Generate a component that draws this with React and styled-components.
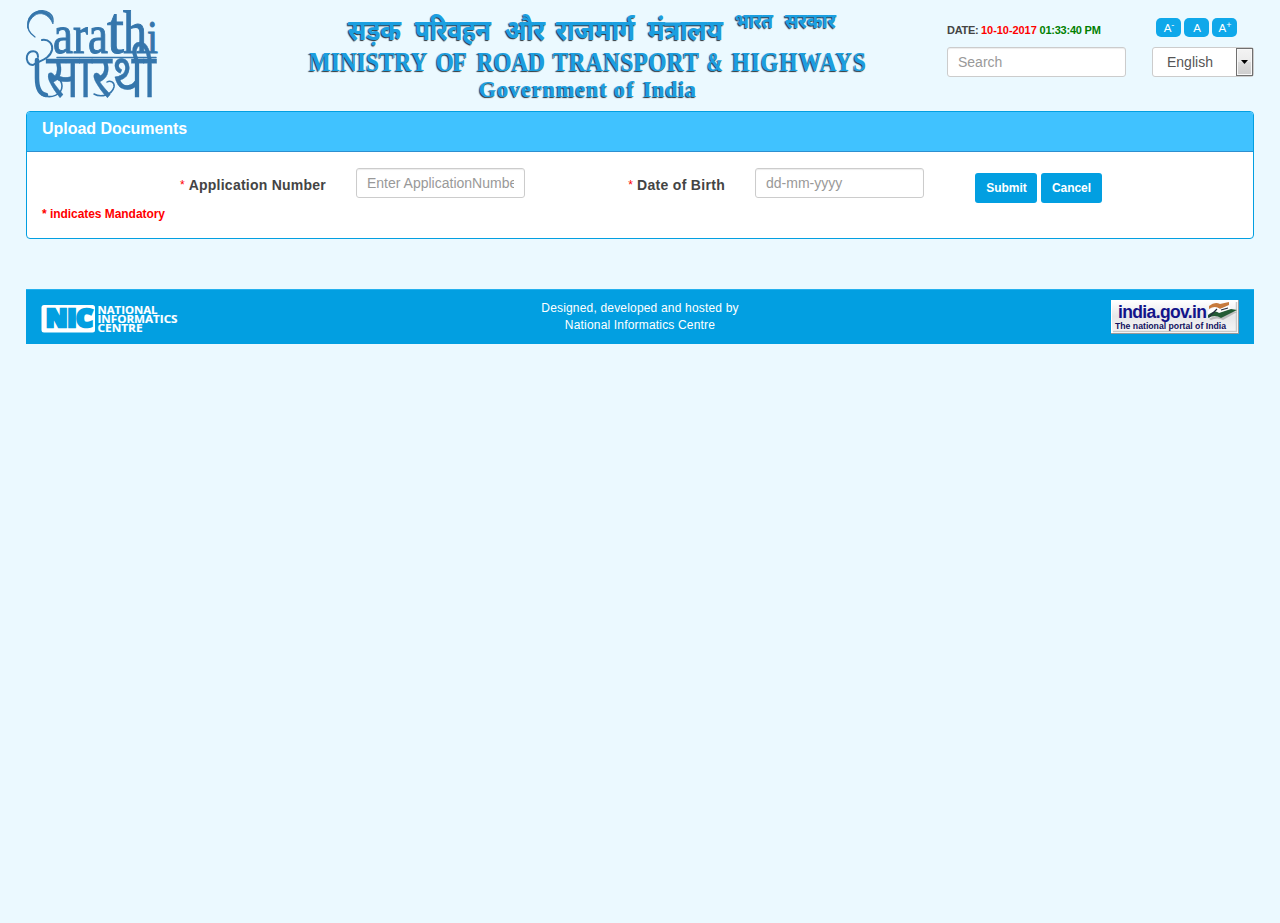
import React from "react";
import styled, { createGlobalStyle } from "styled-components";

const GlobalStyle = createGlobalStyle`
  * { box-sizing: border-box; }
  body {
    margin: 0;
    background: #ebf9ff;
    font-family: "Liberation Sans", Arial, sans-serif;
    font-size: 14px;
    color: #444;
  }
`;

const Page = styled.div`
  width: 1228px;
  margin: 0 auto;
`;

const Header = styled.header`
  display: flex;
  height: 111px;
`;

const LogoCell = styled.div`
  width: 280px;
  padding-top: 4px;
`;

const BannerCell = styled.div`
  width: 641px;
`;

const Drawing = styled.svg`
  display: block;
  overflow: visible;
`;

const BannerText = styled.text`
  fill: #1b9fe0;
  font-family: ${(p) => (p.$latin ? '"Liberation Serif", serif' : '"Noto Sans Devanagari", "Noto Sans", sans-serif')};
  font-weight: 700;
  text-shadow: -1px 1px 1px rgba(20, 30, 36, 0.9);
`;

const LogoText = styled.text`
  fill: #3576ac;
  stroke: #3576ac;
  stroke-width: ${(p) => (p.$hindi ? 0.3 : 1)}px;
  font-family: ${(p) => (p.$hindi ? '"Noto Sans Devanagari", "Noto Sans", sans-serif' : '"Liberation Serif", serif')};
`;

const Tools = styled.div`
  display: flex;
  gap: 26px;
`;

const ToolColumn = styled.div`
  width: ${(p) => p.$width}px;
  padding-top: 18px;
`;

const DateLine = styled.div`
  height: 29px;
  padding-top: 5px;
  font-size: 11px;
  line-height: 15px;
  font-weight: 700;
  letter-spacing: ${(p) => p.$spacing}px;
  white-space: nowrap;
`;

const Tone = styled.span`
  color: ${(p) => p.$color};
  letter-spacing: ${(p) => p.$spacing}px;
`;

const SizeButtons = styled.div`
  display: flex;
  gap: 3px;
  height: 29px;
  padding-left: 4px;
`;

const SizeButton = styled.button`
  width: 25px;
  height: 19px;
  padding: 0 0 0 1px;
  border: 0;
  border-radius: 5px;
  background: #0fa8ea;
  color: #fff;
  font: 11.5px/20px "Liberation Sans", Arial, sans-serif;
  sup { font-size: 9px; line-height: 0; vertical-align: 4px; }
`;

const TextInput = styled.input`
  display: block;
  width: ${(p) => p.$width}px;
  height: 30px;
  padding: 5px 10px;
  border: 1px solid #ccc;
  border-radius: 3px;
  background: #fff;
  box-shadow: inset 0 1px 1px rgba(0, 0, 0, 0.075);
  font: 14px/18px "Liberation Sans", Arial, sans-serif;
  &::placeholder { color: #999; opacity: 1; }
`;

const LanguageSelect = styled.div`
  display: flex;
  justify-content: space-between;
  width: 102px;
  height: 30px;
  padding-left: 14px;
  border: 1px solid #ccc;
  border-radius: 3px;
  background: #fff;
  color: #555;
  line-height: 28px;
`;

const SelectArrow = styled.span`
  display: flex;
  align-items: center;
  justify-content: center;
  width: 17px;
  height: 28px;
  border: 1px solid #707070;
  background: linear-gradient(#f3f3f3 0%, #ebebeb 49%, #dddddd 50%, #cdcdcd 100%);
  box-shadow: inset 0 0 0 1px #f8f8f8;
`;

const Panel = styled.section`
  height: 128px;
  border: 1px solid #029fe1;
  border-radius: 4px;
  background: #fff;
  overflow: hidden;
`;

const PanelHeading = styled.h1`
  height: 40px;
  margin: 0;
  padding: 8px 15px 0;
  border-bottom: 1px solid #2e8fcf;
  background: #40c2ff;
  color: #fff;
  font-size: 16px;
  line-height: 18px;
  font-weight: 700;
  letter-spacing: -0.04px;
`;

const FormRow = styled.form`
  display: flex;
  height: 51px;
  padding-top: 16px;
`;

const FieldLabel = styled.label`
  width: ${(p) => p.$width}px;
  padding: 9px 30px 0 0;
  text-align: right;
  font-size: 14px;
  line-height: 16px;
  font-weight: 700;
  letter-spacing: ${(p) => p.$spacing}px;
  white-space: nowrap;
`;

const Star = styled.span`
  margin-right: 3.8px;
  color: #f00;
  font-size: 12px;
  font-weight: 400;
  vertical-align: 1px;
`;

const Actions = styled.div`
  display: flex;
  gap: 4px;
  padding: 5px 0 0 51px;
`;

const ActionButton = styled.button`
  width: ${(p) => p.$width}px;
  height: 30px;
  padding: 0 0 0 ${(p) => p.$inset || 0}px;
  border: 0;
  border-radius: 3px;
  background: #029fe1;
  color: #fff;
  font: 700 12px/18px "Liberation Sans", Arial, sans-serif;
  letter-spacing: -0.05px;
`;

const Mandatory = styled.p`
  margin: 3px 0 0 15px;
  color: #f00;
  font-size: 12px;
  line-height: 16px;
  font-weight: 700;
  letter-spacing: -0.05px;
`;

const Footer = styled.footer`
  display: grid;
  grid-template-columns: 1fr 1fr 1fr;
  height: 55px;
  margin-top: 50px;
  padding: 0 15px;
  border-top: 1px solid #25b1ee;
  background: #029fe1;
`;

const FooterCell = styled.div`
  display: flex;
  justify-content: ${(p) => p.$align};
  padding-top: ${(p) => p.$top}px;
  color: #fff;
  font-size: 12px;
  line-height: 17px;
  letter-spacing: ${(p) => p.$spacing || 0}px;
  text-align: center;
`;

const logoLetters = [
  { char: "a", x: 53, width: 20, size: 55 },
  { char: "r", x: 73, width: 15, size: 55 },
  { char: "a", x: 88, width: 20, size: 55 },
  { char: "t", x: 107, width: 17, size: 68 },
  { char: "h", x: 123, width: 24, size: 62 },
  { char: "i", x: 147, width: 11, size: 47 },
];

function SarathiLogo() {
  return (
    <Drawing width="140" height="100" viewBox="26 4 140 100" role="img" aria-label="Sarathi">
      <g fill="none" stroke="#3576ac" strokeLinecap="round">
        <path d="M35 37C23 29 27 14 39 11C47 9 54 15 53 22" strokeWidth="1.3" />
        <path d="M28 28C26 17 34 10 43 11C49 12 53 17 53 24C49 14 40 11 34 16C29 20 28 25 28 28" fill="#3576ac" strokeWidth=".8" />
        <path d="M42 40C49 39 53 44 52 50C50 59 39 61 33 65C28 65 26 60 27 56C29 50 38 49 38 57" strokeWidth="2" />
        <path d="M57 57.5H156" strokeWidth="1.5" />
        <path d="M37 60V78C37 88 40 94 46 95" strokeWidth="4.5" />
        <path d="M42 95C51 99 62 95 62 86C62 82 60 80 58 79" strokeWidth="1.6" />
        <path d="M94 94C101 98 112 95 114 87C115 82 110 80 107 82" strokeWidth="1.5" />
      </g>
      {logoLetters.map((letter) => (
        <LogoText
          key={letter.x}
          x={letter.x}
          y="53"
          fontSize={letter.size}
          textLength={letter.width}
          lengthAdjust="spacingAndGlyphs"
        >
          {letter.char}
        </LogoText>
      ))}
      <g transform="translate(46 97) scale(1 1.22)">
        <LogoText $hindi fontSize="50" textLength="110" lengthAdjust="spacingAndGlyphs">सारथी</LogoText>
      </g>
    </Drawing>
  );
}

const bannerWords = [
  { word: "सड़क", x: 348, end: 401, y: 39.5, size: 28 },
  { word: "परिवहन", x: 415, end: 491, y: 39.5, size: 28 },
  { word: "और", x: 505, end: 545, y: 39.5, size: 28 },
  { word: "राजमार्ग", x: 556, end: 635, y: 39.5, size: 28 },
  { word: "मंत्रालय", x: 648, end: 723, y: 39.5, size: 28 },
  { word: "भारत", x: 735, end: 773, y: 27.5, size: 20 },
  { word: "सरकार", x: 785, end: 836, y: 27.5, size: 20 },
];

const latinWords = [
  { word: "MINISTRY", x: 309, end: 427.5, y: 71, size: 27, scale: 0.85 },
  { word: "OF", x: 436, end: 467, y: 71, size: 27, scale: 0.85 },
  { word: "ROAD", x: 477, end: 545, y: 71, size: 27, scale: 0.85 },
  { word: "TRANSPORT", x: 553, end: 699, y: 71, size: 27, scale: 0.85 },
  { word: "&", x: 707, end: 723, y: 71, size: 27, scale: 0.85 },
  { word: "HIGHWAYS", x: 732, end: 866, y: 71, size: 27, scale: 0.85 },
  { word: "Government", x: 479, end: 607, y: 96.5, size: 24, scale: 0.92 },
  { word: "of", x: 614, end: 634, y: 96.5, size: 24, scale: 0.92 },
  { word: "India", x: 643, end: 696, y: 96.5, size: 24, scale: 0.92 },
];

function MinistryBanner() {
  return (
    <Drawing width="570" height="108" viewBox="306 0 570 108">
      {bannerWords.map((w) => (
        <BannerText key={w.x} x={w.x} y={w.y} fontSize={w.size} textLength={w.end - w.x} lengthAdjust="spacingAndGlyphs">
          {w.word}
        </BannerText>
      ))}
      {latinWords.map((w) => (
        <g key={w.word} transform={`translate(${w.x} ${w.y}) scale(${w.scale} 1)`}>
          <BannerText $latin fontSize={w.size} textLength={(w.end - w.x) / w.scale} lengthAdjust={w.word === "&" ? "spacingAndGlyphs" : "spacing"}>
            {w.word}
          </BannerText>
        </g>
      ))}
    </Drawing>
  );
}

function NicLogo() {
  return (
    <Drawing width="138" height="30" viewBox="0 0 138 30">
      <rect x="0.5" y="1" width="53.5" height="27.5" rx="2.5" fill="#fff" />
      <text x="5" y="23.4" fontFamily="Open Sans, sans-serif" fontSize="24" fontWeight="800" textLength="47" lengthAdjust="spacingAndGlyphs" fill="#029fe1" stroke="#029fe1" strokeWidth="2.6">NIC</text>
      <g fill="#fff" stroke="#fff" strokeWidth=".15" fontFamily="Open Sans, sans-serif" fontSize="10.8" fontWeight="700">
        <text x="56.5" y="9.8" textLength="60" lengthAdjust="spacingAndGlyphs">NATIONAL</text>
        <text x="56.5" y="18.9" textLength="80" lengthAdjust="spacingAndGlyphs">INFORMATICS</text>
        <text x="56.5" y="28" textLength="45" lengthAdjust="spacingAndGlyphs">CENTRE</text>
      </g>
    </Drawing>
  );
}

function PortalBadge() {
  return (
    <Drawing width="128" height="34" viewBox="0 0 128 34">
      <defs>
        <linearGradient id="plate" x2="0" y2="1">
          <stop stopColor="#fff" />
          <stop offset=".5" stopColor="#e7e7e9" />
          <stop offset="1" stopColor="#f5f5f5" />
        </linearGradient>
      </defs>
      <rect width="128" height="34" fill="#999" />
      <rect width="127" height="33" fill="#fff" />
      <rect x="1" y="1" width="125" height="31" fill="url(#plate)" />
      <path d="M125.5 2V31.5H2" fill="none" stroke="#c9c9c9" strokeWidth="1.5" />
      <path d="M98 19Q103 15 109 17L121 11L126 12L112 20Q106 17 100 20Z" fill="#777" opacity=".4" />
      <path d="M98 6Q104 1 109 4L118 2L118 6L109 9Q104 5 98 9Z" fill="#c77b3d" />
      <path d="M97 11Q104 5 109 9L118 5L120 9L109 13Q103 10 97 15Z" fill="#fff" />
      <path d="M97 15Q104 9 108 13L120 9L126 10L110 18Q104 14 97 18Z" fill="#245c35" />
      <path d="M106 9L98 17M110 10L117 8" fill="none" stroke="#262d3c" strokeWidth="1.2" />
      <text x="7" y="18" fontFamily="Liberation Sans, sans-serif" fontWeight="700" fontSize="17.5" textLength="89" lengthAdjust="spacing" fill="#13148a">india.gov.in</text>
      <text x="4" y="29" fontFamily="Liberation Sans, sans-serif" fontWeight="700" fontSize="8.2" textLength="111" lengthAdjust="spacingAndGlyphs" fill="#12125e">The national portal of India</text>
    </Drawing>
  );
}

export default function App() {
  return (
    <>
      <GlobalStyle />
      <Page>
        <Header>
          <LogoCell><SarathiLogo /></LogoCell>
          <BannerCell><MinistryBanner /></BannerCell>
          <Tools>
            <ToolColumn $width={179}>
              <DateLine $spacing={-0.3}>DATE: <Tone $color="#f00" $spacing={-0.06}>10-10-2017</Tone> <Tone $color="green" $spacing={-0.22}>01:33:40 PM</Tone></DateLine>
              <TextInput $width={179} placeholder="Search" />
            </ToolColumn>
            <ToolColumn $width={102}>
              <SizeButtons>
                <SizeButton>A<sup>-</sup></SizeButton>
                <SizeButton>A</SizeButton>
                <SizeButton>A<sup>+</sup></SizeButton>
              </SizeButtons>
              <LanguageSelect>
                English
                <SelectArrow>
                  <svg width="7" height="4" viewBox="0 0 7 4"><path d="M0 0H7L3.5 4Z" /></svg>
                </SelectArrow>
              </LanguageSelect>
            </ToolColumn>
          </Tools>
        </Header>
        <Panel>
          <PanelHeading>Upload Documents</PanelHeading>
          <FormRow>
            <FieldLabel $width={329} $spacing={0.24}><Star>*</Star>Application Number</FieldLabel>
            <TextInput $width={169} placeholder="Enter ApplicationNumber" />
            <FieldLabel $width={230} $spacing={0.3}><Star>*</Star>Date of Birth</FieldLabel>
            <TextInput $width={169} placeholder="dd-mm-yyyy" />
            <Actions>
              <ActionButton type="button" $width={62} $inset={1}>Submit</ActionButton>
              <ActionButton type="button" $width={61}>Cancel</ActionButton>
            </Actions>
          </FormRow>
          <Mandatory>* indicates Mandatory</Mandatory>
        </Panel>
        <Footer>
          <FooterCell $align="flex-start" $top={14}><NicLogo /></FooterCell>
          <FooterCell $align="center" $top={10} $spacing={0.18}>Designed, developed and hosted by<br />National Informatics Centre</FooterCell>
          <FooterCell $align="flex-end" $top={10}><PortalBadge /></FooterCell>
        </Footer>
      </Page>
    </>
  );
}
